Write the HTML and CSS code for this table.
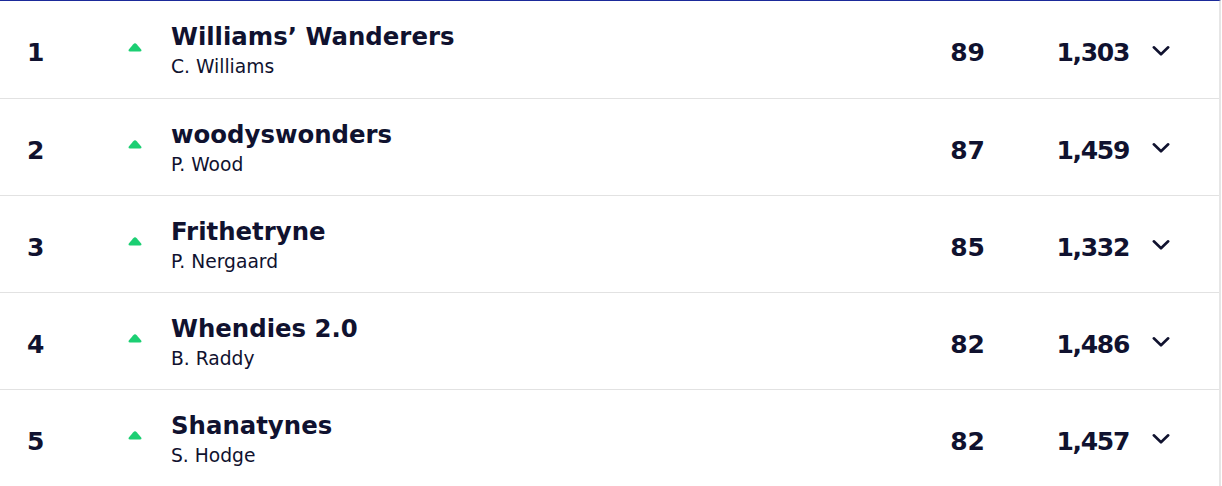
FILE: index.html
```html
<!DOCTYPE html>
<html>
<head>
<meta charset="utf-8">
<link rel="stylesheet" href="styles.css">
</head>
<body>
<div class="table">
  <div class="row">
    <div class="rank">1</div>
    <div class="move"><svg viewBox="0 0 14 9" width="14" height="9"><path d="M7 0.3 Q7.9 0.3 8.7 1.2 L13.2 6.4 Q14.2 8.6 12 8.6 L2 8.6 Q-0.2 8.6 0.8 6.4 L5.3 1.2 Q6.1 0.3 7 0.3Z"/></svg></div>
    <div class="team"><div class="name">Williams’ Wanderers</div><div class="manager">C. Williams</div></div>
    <div class="gw">89</div>
    <div class="total">1,303</div>
    <div class="chev"><svg viewBox="0 0 18 12" width="18" height="12"><path d="M1.8 2.3 L9 9.3 L16.2 2.3"/></svg></div>
  </div>
  <div class="row">
    <div class="rank">2</div>
    <div class="move"><svg viewBox="0 0 14 9" width="14" height="9"><path d="M7 0.3 Q7.9 0.3 8.7 1.2 L13.2 6.4 Q14.2 8.6 12 8.6 L2 8.6 Q-0.2 8.6 0.8 6.4 L5.3 1.2 Q6.1 0.3 7 0.3Z"/></svg></div>
    <div class="team"><div class="name">woodyswonders</div><div class="manager">P. Wood</div></div>
    <div class="gw">87</div>
    <div class="total">1,459</div>
    <div class="chev"><svg viewBox="0 0 18 12" width="18" height="12"><path d="M1.8 2.3 L9 9.3 L16.2 2.3"/></svg></div>
  </div>
  <div class="row">
    <div class="rank">3</div>
    <div class="move"><svg viewBox="0 0 14 9" width="14" height="9"><path d="M7 0.3 Q7.9 0.3 8.7 1.2 L13.2 6.4 Q14.2 8.6 12 8.6 L2 8.6 Q-0.2 8.6 0.8 6.4 L5.3 1.2 Q6.1 0.3 7 0.3Z"/></svg></div>
    <div class="team"><div class="name">Frithetryne</div><div class="manager">P. Nergaard</div></div>
    <div class="gw">85</div>
    <div class="total">1,332</div>
    <div class="chev"><svg viewBox="0 0 18 12" width="18" height="12"><path d="M1.8 2.3 L9 9.3 L16.2 2.3"/></svg></div>
  </div>
  <div class="row">
    <div class="rank">4</div>
    <div class="move"><svg viewBox="0 0 14 9" width="14" height="9"><path d="M7 0.3 Q7.9 0.3 8.7 1.2 L13.2 6.4 Q14.2 8.6 12 8.6 L2 8.6 Q-0.2 8.6 0.8 6.4 L5.3 1.2 Q6.1 0.3 7 0.3Z"/></svg></div>
    <div class="team"><div class="name">Whendies 2.0</div><div class="manager">B. Raddy</div></div>
    <div class="gw">82</div>
    <div class="total">1,486</div>
    <div class="chev"><svg viewBox="0 0 18 12" width="18" height="12"><path d="M1.8 2.3 L9 9.3 L16.2 2.3"/></svg></div>
  </div>
  <div class="row">
    <div class="rank">5</div>
    <div class="move"><svg viewBox="0 0 14 9" width="14" height="9"><path d="M7 0.3 Q7.9 0.3 8.7 1.2 L13.2 6.4 Q14.2 8.6 12 8.6 L2 8.6 Q-0.2 8.6 0.8 6.4 L5.3 1.2 Q6.1 0.3 7 0.3Z"/></svg></div>
    <div class="team"><div class="name">Shanatynes</div><div class="manager">S. Hodge</div></div>
    <div class="gw">82</div>
    <div class="total">1,457</div>
    <div class="chev"><svg viewBox="0 0 18 12" width="18" height="12"><path d="M1.8 2.3 L9 9.3 L16.2 2.3"/></svg></div>
  </div>
</div>
</body>
</html>
```
FILE: styles.css
```css
html, body {
  margin: 0;
  padding: 0;
  background: #ffffff;
  overflow: hidden;
}
.table {
  width: 1219px;
  border-top: 1px solid #1b2a9a;
  border-right: 2px solid #e6e6e6;
  font-family: "DejaVu Sans", Verdana, sans-serif;
  color: #10122f;
}
.row {
  display: grid;
  grid-template-columns: 101px 43px 1fr 90px 143px 91px;
  align-items: center;
  height: 90px;
  padding: 6px 0 0 27px;
  border-bottom: 1px solid #e2e2e2;
}
.row:first-child { height: 91px; }
.rank {
  font-size: 25px;
  font-weight: 700;
  letter-spacing: -1px;
}
.move {
  display: flex;
  align-items: center;
  margin-bottom: 11px;
}
.move svg { fill: #1ccf73; display: block; }
.team {
  display: flex;
  flex-direction: column;
}
.name {
  font-size: 24.4px;
  font-weight: 700;
  line-height: 28px;
  white-space: nowrap;
}
.manager {
  font-size: 18.7px;
  font-weight: 400;
  line-height: 31px;
  white-space: nowrap;
}
.gw, .total {
  font-size: 25px;
  font-weight: 700;
  text-align: right;
}
.total {
  letter-spacing: -1.3px;
  margin-right: -1px;
}
.chev {
  display: flex;
  padding-left: 24px;
  margin-bottom: 4px;
}
.chev svg {
  display: block;
  fill: none;
  stroke: #10122f;
  stroke-width: 2.6;
  stroke-linecap: round;
  stroke-linejoin: round;
}
```
